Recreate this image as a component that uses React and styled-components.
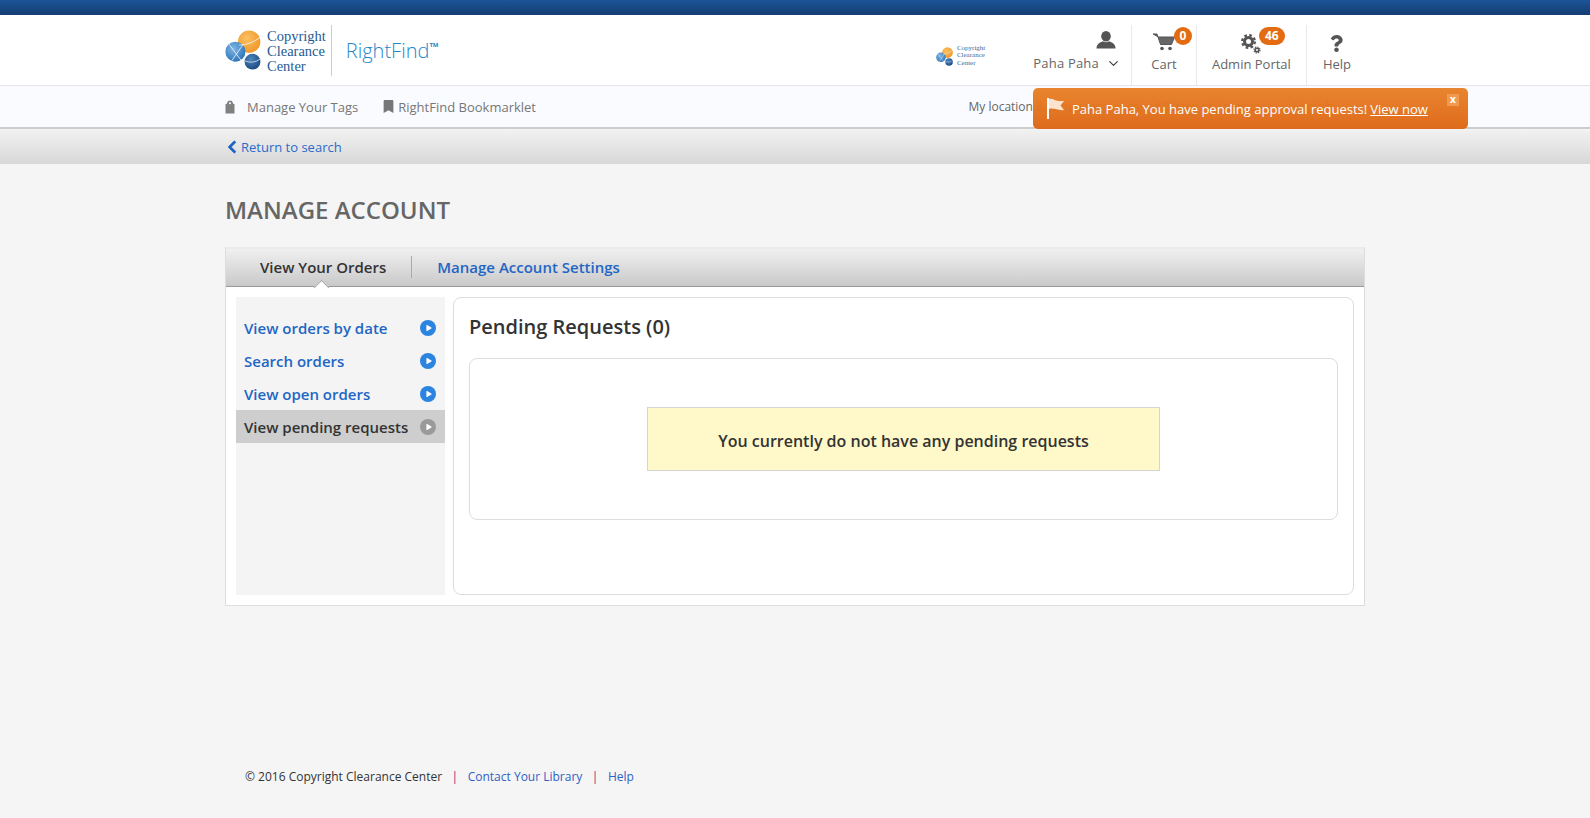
import styled, { createGlobalStyle } from "styled-components";
import { FaBookmark, FaChevronLeft, FaPlay, FaQuestion } from "react-icons/fa";
import { FiChevronDown } from "react-icons/fi";

const GlobalStyle = createGlobalStyle`
  html, body { margin: 0; padding: 0; }
  body {
    background: #f5f5f5;
    font-family: "Open Sans", "Noto Sans", sans-serif;
    color: #333;
    height: 818px;
    overflow: hidden;
  }
  a { text-decoration: none; }
`;

const Page = styled.div`
  position: relative;
  height: 818px;
  display: flex;
  flex-direction: column;
`;

const TopStrip = styled.div`
  height: 15px;
  background: linear-gradient(#1b5497, #153d73);
`;

const Wrap = styled.div`
  width: 1140px;
  margin: 0 auto;
  display: flex;
  align-items: center;
  height: 100%;
`;

const Header = styled.header`
  height: 70px;
  background: #fff;
  border-bottom: 1px solid #e2e4ea;
`;

const LogoBlock = styled.div`
  display: flex;
  align-items: center;
  height: 50px;
`;

const LogoText = styled.div`
  font-family: "Liberation Serif", serif;
  font-size: ${p => p.$small ? "7px" : "14.5px"};
  line-height: ${p => p.$small ? "7.5px" : "15px"};
  color: ${p => p.$small ? "#3d6a9a" : "#1f5b92"};
  margin-left: 2px;
  padding-top: ${p => p.$small ? "0" : "2px"};
`;

const LogoDivider = styled.div`
  width: 1px;
  height: 51px;
  background: #ccc;
  margin: 0 14px 0 5px;
`;

const Product = styled.div`
  font-weight: 300;
  font-size: 20px;
  color: #1f87c8;
  sup { font-size: 6px; font-weight: 700; position: relative; top: -3px; vertical-align: super; line-height: 0; }
`;

const Nav = styled.nav`
  margin-left: auto;
  display: flex;
  height: 100%;
  align-items: flex-end;
`;

const SmallLogo = styled.div`
  display: flex;
  align-items: center;
  height: 24px;
  margin: 0 34px 17px 0;
`;

const NavCell = styled.div`
  position: relative;
  height: 60px;
  padding: ${p => p.$pad || "0 15px"};
  box-sizing: border-box;
  display: flex;
  flex-direction: column;
  align-items: center;
  font-size: 13px;
  color: #666;
  border-right: ${p => p.$divider ? "1px solid #e9e9e9" : "none"};
  min-width: ${p => p.$min || "0"};
`;

const NavIcon = styled.div`
  height: 20px;
  margin-top: ${p => p.$top || "7px"};
  margin-right: ${p => p.$right || "0"};
  align-self: ${p => p.$right ? "flex-end" : "center"};
  color: #555;
  font-size: 17px;
  display: flex;
  align-items: center;
  justify-content: center;
`;

const NavLabel = styled.div`
  margin-top: ${p => p.$top || "3px"};
  line-height: 18px;
  display: flex;
  align-items: center;
  letter-spacing: ${p => p.$spaced ? "0.2px" : "0"};
  svg { margin-left: 7px; font-size: 15px; color: #444; }
`;

const Badge = styled.span`
  position: absolute;
  top: 2px;
  left: ${p => p.$left};
  min-width: 18px;
  height: 18px;
  padding: ${p => p.$wide ? "0 6px" : "0"};
  box-sizing: border-box;
  border-radius: 9px;
  background: #e36c12;
  color: #fff;
  font-size: 12px;
  font-weight: 700;
  line-height: 18px;
  text-align: center;
`;

const SubBar = styled.div`
  height: 41px;
  background: #f9fbfe;
  border-bottom: 2px solid #ccc;
`;

const SubLink = styled.a`
  display: flex;
  align-items: center;
  font-size: 13px;
  color: #777;
  margin-right: ${p => p.$gap || "0"};
  svg { margin-right: ${p => p.$iconGap || "4px"}; color: #777; }
`;

const Locale = styled.div`
  margin-left: auto;
  margin-right: 32px;
  display: flex;
  font-size: 12px;
  color: #666;
`;

const LocaleItem = styled.span`
  margin-right: ${p => p.$gap || "0"};
`;

const ReturnBar = styled.div`
  height: 34px;
  margin-top: 1px;
  background: linear-gradient(#f1f1f1, #d8d8d8);
`;

const ReturnLink = styled.a`
  display: flex;
  align-items: center;
  font-size: 13px;
  color: #2a6bc9;
  svg { margin-right: 2px; font-size: 14px; color: #1f66c4; stroke: currentColor; stroke-width: 30; }
`;

const Content = styled.main`
  width: 1140px;
  margin: 0 auto;
`;

const Title = styled.h1`
  margin: 31px 0 22px;
  font-size: 24px;
  line-height: 30px;
  font-weight: 600;
  color: #666;
`;

const Panel = styled.section`
  height: 359px;
  box-sizing: border-box;
  background: #fff;
  border: 1px solid #ddd;
  border-top: 2px solid #eaeaea;
  display: flex;
  flex-direction: column;
`;

const Tabs = styled.div`
  height: 38px;
  flex: none;
  box-sizing: border-box;
  background: linear-gradient(#f0f0f0, #c9c9c9);
  border-bottom: 1px solid #999;
  display: flex;
  align-items: center;
  font-size: 15px;
  font-weight: 600;
  padding: 0 0 2px 34px;
`;

const Tab = styled.a`
  position: relative;
  color: ${p => p.$active ? "#333" : "#1f66c4"};
  line-height: 22px;
  ${p => p.$active && `
    padding-right: 25px;
    margin-right: 25px;
    border-right: 1px solid #aaa;
    &::after {
      content: "";
      position: absolute;
      left: 56px;
      top: 26px;
      width: 11px;
      height: 11px;
      box-sizing: border-box;
      background: #fff;
      border-left: 1px solid #aaa;
      border-top: 1px solid #aaa;
      transform: rotate(45deg);
    }
  `}
`;

const PanelBody = styled.div`
  flex: 1;
  display: flex;
  gap: 8px;
  padding: 10px;
`;

const Sidebar = styled.aside`
  width: 209px;
  flex: none;
  background: #f4f4f4;
  padding-top: 14px;
  box-sizing: border-box;
`;

const SideItem = styled.a`
  height: 33px;
  display: flex;
  align-items: center;
  justify-content: space-between;
  padding: 0 9px 0 8px;
  font-size: 15px;
  font-weight: 600;
  color: ${p => p.$active ? "#333" : "#1f66c4"};
  background: ${p => p.$active ? "#cecece" : "transparent"};
`;

const Bullet = styled.span`
  width: 16px;
  height: 16px;
  border-radius: 50%;
  background: ${p => p.$active ? "#9a9a9a" : "#2a84e0"};
  display: flex;
  align-items: center;
  justify-content: center;
  color: #fff;
  font-size: 6px;
  padding-left: 1px;
  box-sizing: border-box;
`;

const MainCard = styled.div`
  flex: 1;
  border: 1px solid #ddd;
  border-radius: 8px;
  padding: 14px 15px;
  box-sizing: border-box;
`;

const CardTitle = styled.h2`
  margin: 0 0 16px;
  font-size: 20px;
  line-height: 30px;
  font-weight: 600;
  color: #333;
`;

const InnerBox = styled.div`
  height: 162px;
  box-sizing: border-box;
  border: 1px solid #ddd;
  border-radius: 8px;
  padding-top: 48px;
`;

const Notice = styled.div`
  width: 513px;
  height: 64px;
  box-sizing: border-box;
  margin: 0 auto;
  background: #fff8c9;
  border: 1px solid #d4d4d4;
  font-size: 16px;
  font-weight: 600;
  color: #333;
  display: flex;
  align-items: center;
  justify-content: center;
  padding-top: 3px;
`;

const Footer = styled.footer`
  width: 1140px;
  margin: 162px auto 0;
  padding-left: 20px;
  box-sizing: border-box;
  font-size: 12px;
  line-height: 18px;
  color: #333;
  display: flex;
`;

const FooterLink = styled.a`
  color: #2f62c4;
`;

const Pipe = styled.span`
  color: #8b2a78;
  margin: 0 9.5px;
`;

const Alert = styled.div`
  position: absolute;
  left: 1033px;
  top: 88px;
  width: 435px;
  height: 41px;
  box-sizing: border-box;
  border-radius: 5px;
  background: linear-gradient(rgba(232, 128, 38, 0.96), rgba(222, 104, 24, 0.98));
  color: #fff;
  font-size: 13px;
  display: flex;
  align-items: center;
  padding-left: 14px;
  a { color: #fff; text-decoration: underline; margin-left: 3px; }
`;

const FlagIcon = styled.svg`
  width: 18px;
  height: 21px;
  margin: 0 7px 0 0;
  flex: none;
`;

const AlertClose = styled.span`
  position: absolute;
  right: 9px;
  top: 6px;
  width: 12px;
  height: 12px;
  background: #ef9a4f;
  color: #fff;
  font-size: 10px;
  line-height: 10px;
  font-weight: 700;
  text-align: center;
`;

const Globe = ({ size, id }) => (
  <svg width={size} height={size} viewBox="0 0 48 48">
    <defs>
      <radialGradient id={`${id}o`} cx="0.4" cy="0.35" r="0.8">
        <stop offset="0" stopColor="#fbc063" />
        <stop offset="1" stopColor="#ef8f1d" />
      </radialGradient>
      <radialGradient id={`${id}b`} cx="0.4" cy="0.35" r="0.8">
        <stop offset="0" stopColor="#7fb6e4" />
        <stop offset="1" stopColor="#1f68b0" />
      </radialGradient>
      <radialGradient id={`${id}d`} cx="0.4" cy="0.35" r="0.8">
        <stop offset="0" stopColor="#4f86bd" />
        <stop offset="1" stopColor="#123f78" />
      </radialGradient>
    </defs>
    <circle cx="29" cy="14" r="13.5" fill={`url(#${id}o)`} />
    <circle cx="12.5" cy="26" r="12" fill={`url(#${id}b)`} />
    <path d="M4 16 L19 36 M22 17 L8 37 M17 18 Q30 18 42 9" stroke="#fff" strokeWidth="0.9" fill="none" />
    <circle cx="33" cy="38" r="9.5" fill={`url(#${id}d)`} />
    <path d="M24 37 Q33 41 42 35" stroke="#fff" strokeWidth="0.8" fill="none" />
  </svg>
);

const TagIcon = () => (
  <svg width="10" height="14" viewBox="0 0 10 14">
    <path d="M1.5 4 L3.2 0.8 H6.8 L8.5 4 H9.5 V13.5 H0.5 V4 Z" fill="#808080" />
    <circle cx="5" cy="3.2" r="1" fill="#f9fbfe" />
  </svg>
);

const PersonIcon = () => (
  <svg width="20" height="18" viewBox="0 0 20 18" fill="#555">
    <ellipse cx="10" cy="5.2" rx="4.8" ry="5.2" />
    <path d="M0.5 17.5 C0.5 12.5 4 11.5 7 10.2 C8.5 11.5 11.5 11.5 13 10.2 C16 11.5 19.5 12.5 19.5 17.5 Z" />
  </svg>
);

const CartIcon = () => (
  <svg width="22" height="18" viewBox="0 0 22 18">
    <path d="M0 1 H4 L7.5 11.5 H18.5 L21.5 4 H5.5 Z" fill="#666" stroke="#555" strokeWidth="1" strokeLinejoin="round" />
    <circle cx="9" cy="15.5" r="1.8" fill="#555" />
    <circle cx="17" cy="15.5" r="1.8" fill="#555" />
  </svg>
);

const GearsIcon = () => (
  <svg width="20" height="20" viewBox="0 0 20 20" fill="none" stroke="#555">
    <circle cx="7.5" cy="7.5" r="4" strokeWidth="3" />
    <circle cx="7.5" cy="7.5" r="6.3" strokeWidth="2.4" strokeDasharray="2.6 2.35" />
    <circle cx="16" cy="16" r="1.8" strokeWidth="1.6" />
    <circle cx="16" cy="16" r="3" strokeWidth="1.2" strokeDasharray="1.3 1.05" />
  </svg>
);

const sideItems = ["View orders by date", "Search orders", "View open orders", "View pending requests"];

const App = () => {
  return (
    <Page>
      <GlobalStyle />
      <TopStrip />
      <Header>
        <Wrap>
          <LogoBlock>
            <Globe size={40} id="lg" />
            <LogoText>Copyright<br />Clearance<br />Center</LogoText>
            <LogoDivider />
            <Product>RightFind<sup>TM</sup></Product>
          </LogoBlock>
          <Nav>
            <SmallLogo>
              <Globe size={19} id="sm" />
              <LogoText $small>Copyright<br />Clearance<br />Center</LogoText>
            </SmallLogo>
            <NavCell $divider $pad="0 10px 0 14px">
              <NavIcon $top="5px" $right="5px"><PersonIcon /></NavIcon>
              <NavLabel $top="4px" $spaced>Paha Paha<FiChevronDown /></NavLabel>
            </NavCell>
            <NavCell $divider $min="65px">
              <NavIcon><CartIcon /></NavIcon>
              <NavLabel>Cart</NavLabel>
              <Badge $left="42px">0</Badge>
            </NavCell>
            <NavCell $divider>
              <NavIcon $top="9px"><GearsIcon /></NavIcon>
              <NavLabel $top="1px">Admin Portal</NavLabel>
              <Badge $left="62px" $wide>46</Badge>
            </NavCell>
            <NavCell $pad="0 14px 0 16px">
              <NavIcon $top="8px"><FaQuestion /></NavIcon>
              <NavLabel $top="2px">Help</NavLabel>
            </NavCell>
          </Nav>
        </Wrap>
      </Header>
      <SubBar>
        <Wrap>
          <SubLink $gap="24px" $iconGap="12px"><TagIcon />Manage Your Tags</SubLink>
          <SubLink $iconGap="3px"><FaBookmark size={13} />RightFind Bookmarklet</SubLink>
          <Locale>
            <LocaleItem $gap="18px">My location &amp; Language:</LocaleItem>
            <LocaleItem $gap="32px">United States of America</LocaleItem>
            <LocaleItem>English</LocaleItem>
          </Locale>
        </Wrap>
      </SubBar>
      <ReturnBar>
        <Wrap>
          <ReturnLink><FaChevronLeft />Return to search</ReturnLink>
        </Wrap>
      </ReturnBar>
      <Content>
        <Title>MANAGE ACCOUNT</Title>
        <Panel>
          <Tabs>
            <Tab $active>View Your Orders</Tab>
            <Tab>Manage Account Settings</Tab>
          </Tabs>
          <PanelBody>
            <Sidebar>
              {sideItems.map((label, i) => {
                const active = i === sideItems.length - 1;
                return (
                  <SideItem key={label} $active={active}>
                    {label}
                    <Bullet $active={active}><FaPlay /></Bullet>
                  </SideItem>
                );
              })}
            </Sidebar>
            <MainCard>
              <CardTitle>Pending Requests (0)</CardTitle>
              <InnerBox>
                <Notice>You currently do not have any pending requests</Notice>
              </InnerBox>
            </MainCard>
          </PanelBody>
        </Panel>
      </Content>
      <Footer>
        © 2016 Copyright Clearance Center
        <Pipe>|</Pipe>
        <FooterLink>Contact Your Library</FooterLink>
        <Pipe>|</Pipe>
        <FooterLink>Help</FooterLink>
      </Footer>
      <Alert>
        <FlagIcon viewBox="0 0 18 21">
          <rect x="0" y="0" width="2" height="21" fill="#fff" />
          <path d="M2 1 C6 0 9 4 15 3 L17 3 L13.5 7.5 L17 12 C11 13 7 9.5 2 11 Z" fill="#fbe3cf" />
        </FlagIcon>
        Paha Paha, You have pending approval requests! <a>View now</a>
        <AlertClose>x</AlertClose>
      </Alert>
    </Page>
  );
};

export default App;
